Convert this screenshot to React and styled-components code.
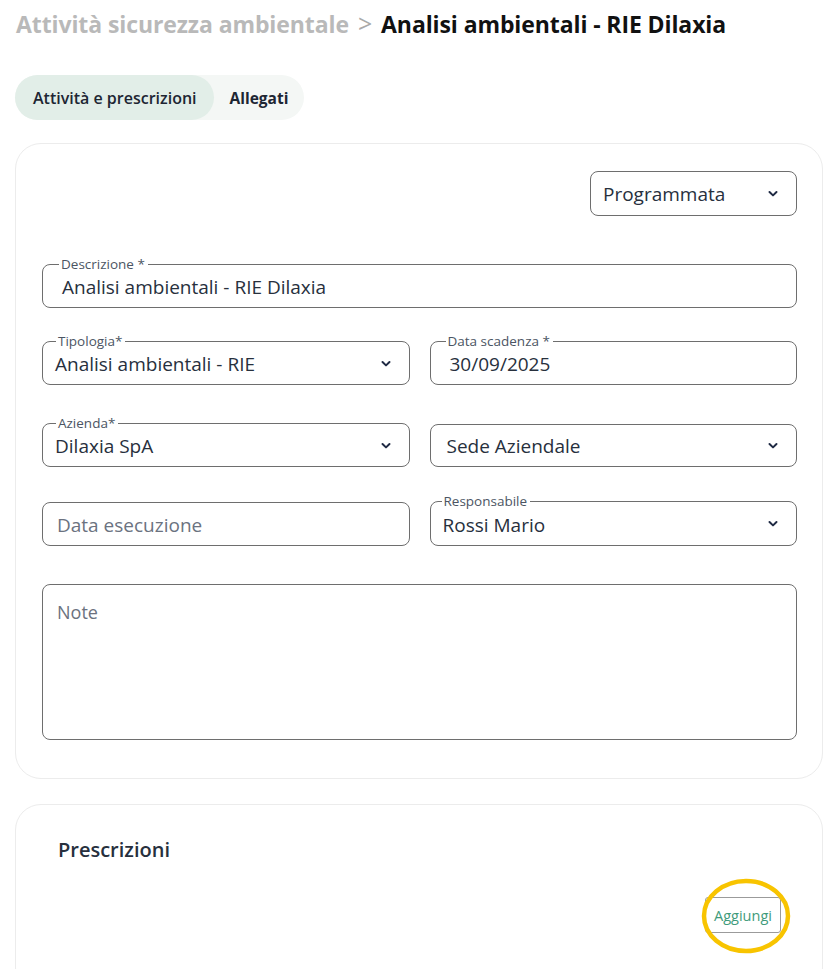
import React from 'react';
import styled, { createGlobalStyle } from 'styled-components';

const GlobalStyle = createGlobalStyle`
    html, body {
        margin: 0;
        padding: 0;
        background: #ffffff;
        font-family: "Open Sans", "Noto Sans", sans-serif;
        color: #1f2a37;
    }
    * { box-sizing: border-box; }
`

const Page = styled.div`
    padding: 4px 17px 0 15px;
    height: 969px;
    overflow: hidden;
`

const Breadcrumb = styled.div`
    display: flex;
    align-items: baseline;
    gap: 9px;
    padding-left: 1px;
    font-size: 23px;
    font-weight: 700;
    line-height: 38px;
    letter-spacing: -0.1px;
`

const Crumb = styled.span`
    color: ${p => (p.$current ? '#111111' : '#b9b9b9')};
`

const Sep = styled.span`
    color: #a9a9a9;
    font-weight: 400;
    font-size: 25px;
`

const Tabs = styled.div`
    display: inline-flex;
    margin-top: 32px;
    background: #f4f7f5;
    border-radius: 23px;
    height: 45px;
`

const Tab = styled.div`
    display: flex;
    align-items: center;
    padding: ${p => (p.$active ? '0 17px 0 18px' : '0 16px')};
    border-radius: 23px;
    font-size: ${p => (p.$active ? 16 : 15.5)}px;
    font-weight: ${p => (p.$active ? 600 : 700)};
    color: #1d2633;
    background: ${p => (p.$active ? '#e2eee8' : 'transparent')};
`

const Card = styled.div`
    margin-top: ${p => p.$top}px;
    border: 1px solid #ececec;
    border-radius: 26px;
    background: #fff;
    padding: ${p => p.$pad};
`

const TopRow = styled.div`
    display: flex;
    justify-content: flex-end;
`

const Row = styled.div`
    display: grid;
    grid-template-columns: ${p => (p.$cols === 2 ? '1fr 1fr' : '1fr')};
    column-gap: 20px;
    margin-top: ${p => p.$top}px;
`

const Field = styled.fieldset`
    margin: 0;
    min-width: 0;
    width: ${p => p.$width || 'auto'};
    height: ${p => (p.$label ? p.$h + 8 : p.$h)}px;
    margin-top: ${p => (p.$label ? -8 : 0)}px;
    padding: 0 12px 0 ${p => p.$pl}px;
    border: 1px solid #6e6e6e;
    border-radius: 8px;
    display: flex;
    align-items: center;
    justify-content: space-between;
`

const Legend = styled.legend`
    font-size: 13.5px;
    line-height: 15px;
    color: #4b5563;
    padding: 0 3px 0 2px;
    margin-left: ${p => p.$ml}px;
`

const Value = styled.span`
    font-size: 19px;
    color: ${p => (p.$muted ? '#6b7280' : '#27303d')};
    margin-top: ${p => (p.$label ? -5 : 1)}px;
    white-space: nowrap;
`

const Chevron = styled.svg`
    width: 12px;
    height: 8px;
    flex: none;
    margin-right: 5px;
    margin-top: ${p => (p.$label ? -6 : 0)}px;
`

const NoteBox = styled.div`
    margin-top: 38px;
    height: 156px;
    border: 1px solid #6e6e6e;
    border-radius: 8px;
    padding: 15px 14px;
    font-size: 18px;
    color: #6b7280;
`

const SectionTitle = styled.div`
    font-size: 20px;
    line-height: 26px;
    font-weight: 600;
    color: #27303d;
`

const Actions = styled.div`
    display: flex;
    justify-content: flex-end;
    margin-top: 34px;
`

const AddWrap = styled.div`
    position: relative;
`

const AddButton = styled.div`
    width: 76px;
    height: 36px;
    border: 1px solid #9b9b9b;
    border-radius: 3px;
    display: flex;
    align-items: center;
    justify-content: center;
    font-size: 14.5px;
    color: #3f9b7b;
    background: #fff;
`

// yellow hand-drawn highlight around the button
const Highlight = styled.svg`
    position: absolute;
    left: -4px;
    top: -19px;
    width: 90px;
    height: 76px;
    overflow: visible;
`

const ChevronIcon = ({ label }) => (
    <Chevron viewBox="0 0 12 8" $label={label}>
        <path d="M2.5 2 L6 5.4 L9.5 2" fill="none" stroke="#1f2a44" strokeWidth="2" strokeLinecap="round" strokeLinejoin="round" />
    </Chevron>
)

const Input = ({ label, value, muted, select, pl = 14, ml = 0, width, h = 43 }) => (
    <Field $label={!!label} $pl={pl} $width={width} $h={h}>
        {label && <Legend $ml={ml}>{label}</Legend>}
        <Value $muted={muted} $label={!!label}>{value}</Value>
        {select && <ChevronIcon label={!!label} />}
    </Field>
)

const App = () => (
    <>
        <GlobalStyle />
        <Page>
            <Breadcrumb>
                <Crumb>Attività sicurezza ambientale</Crumb>
                <Sep>&gt;</Sep>
                <Crumb $current>Analisi ambientali - RIE Dilaxia</Crumb>
            </Breadcrumb>

            <Tabs>
                <Tab $active>Attività e prescrizioni</Tab>
                <Tab>Allegati</Tab>
            </Tabs>

            <Card $top={23} $pad="27px 25px 38px 26px">
                <TopRow>
                    <Input value="Programmata" select pl={12} width="207px" h={45} />
                </TopRow>
                <Row $top={49}>
                    <Input label="Descrizione *" value="Analisi ambientali - RIE Dilaxia" pl={19} ml={-3} />
                </Row>
                <Row $cols={2} $top={34}>
                    <Input label="Tipologia*" value="Analisi ambientali - RIE" select pl={12} ml={1} />
                    <Input label="Data scadenza *" value="30/09/2025" pl={19} ml={-4} />
                </Row>
                <Row $cols={2} $top={39}>
                    <Input label="Azienda*" value="Dilaxia SpA" select pl={12} ml={1} />
                    <Input value="Sede Aziendale" select pl={16} />
                </Row>
                <Row $cols={2} $top={35}>
                    <Input value="Data esecuzione" muted pl={14} h={44} />
                    <Input label="Responsabile" value="Rossi Mario" select pl={12} ml={-1} h={44} />
                </Row>
                <NoteBox>Note</NoteBox>
            </Card>

            <Card $top={25} $pad="32px 41px 60px 42px">
                <SectionTitle>Prescrizioni</SectionTitle>
                <Actions>
                    <AddWrap>
                        <AddButton>Aggiungi</AddButton>
                        <Highlight viewBox="0 0 90 76">
                            <ellipse cx="45" cy="38" rx="42" ry="35" fill="none" stroke="#f8c400" strokeWidth="4.5" />
                        </Highlight>
                    </AddWrap>
                </Actions>
            </Card>
        </Page>
    </>
)

export default App;
